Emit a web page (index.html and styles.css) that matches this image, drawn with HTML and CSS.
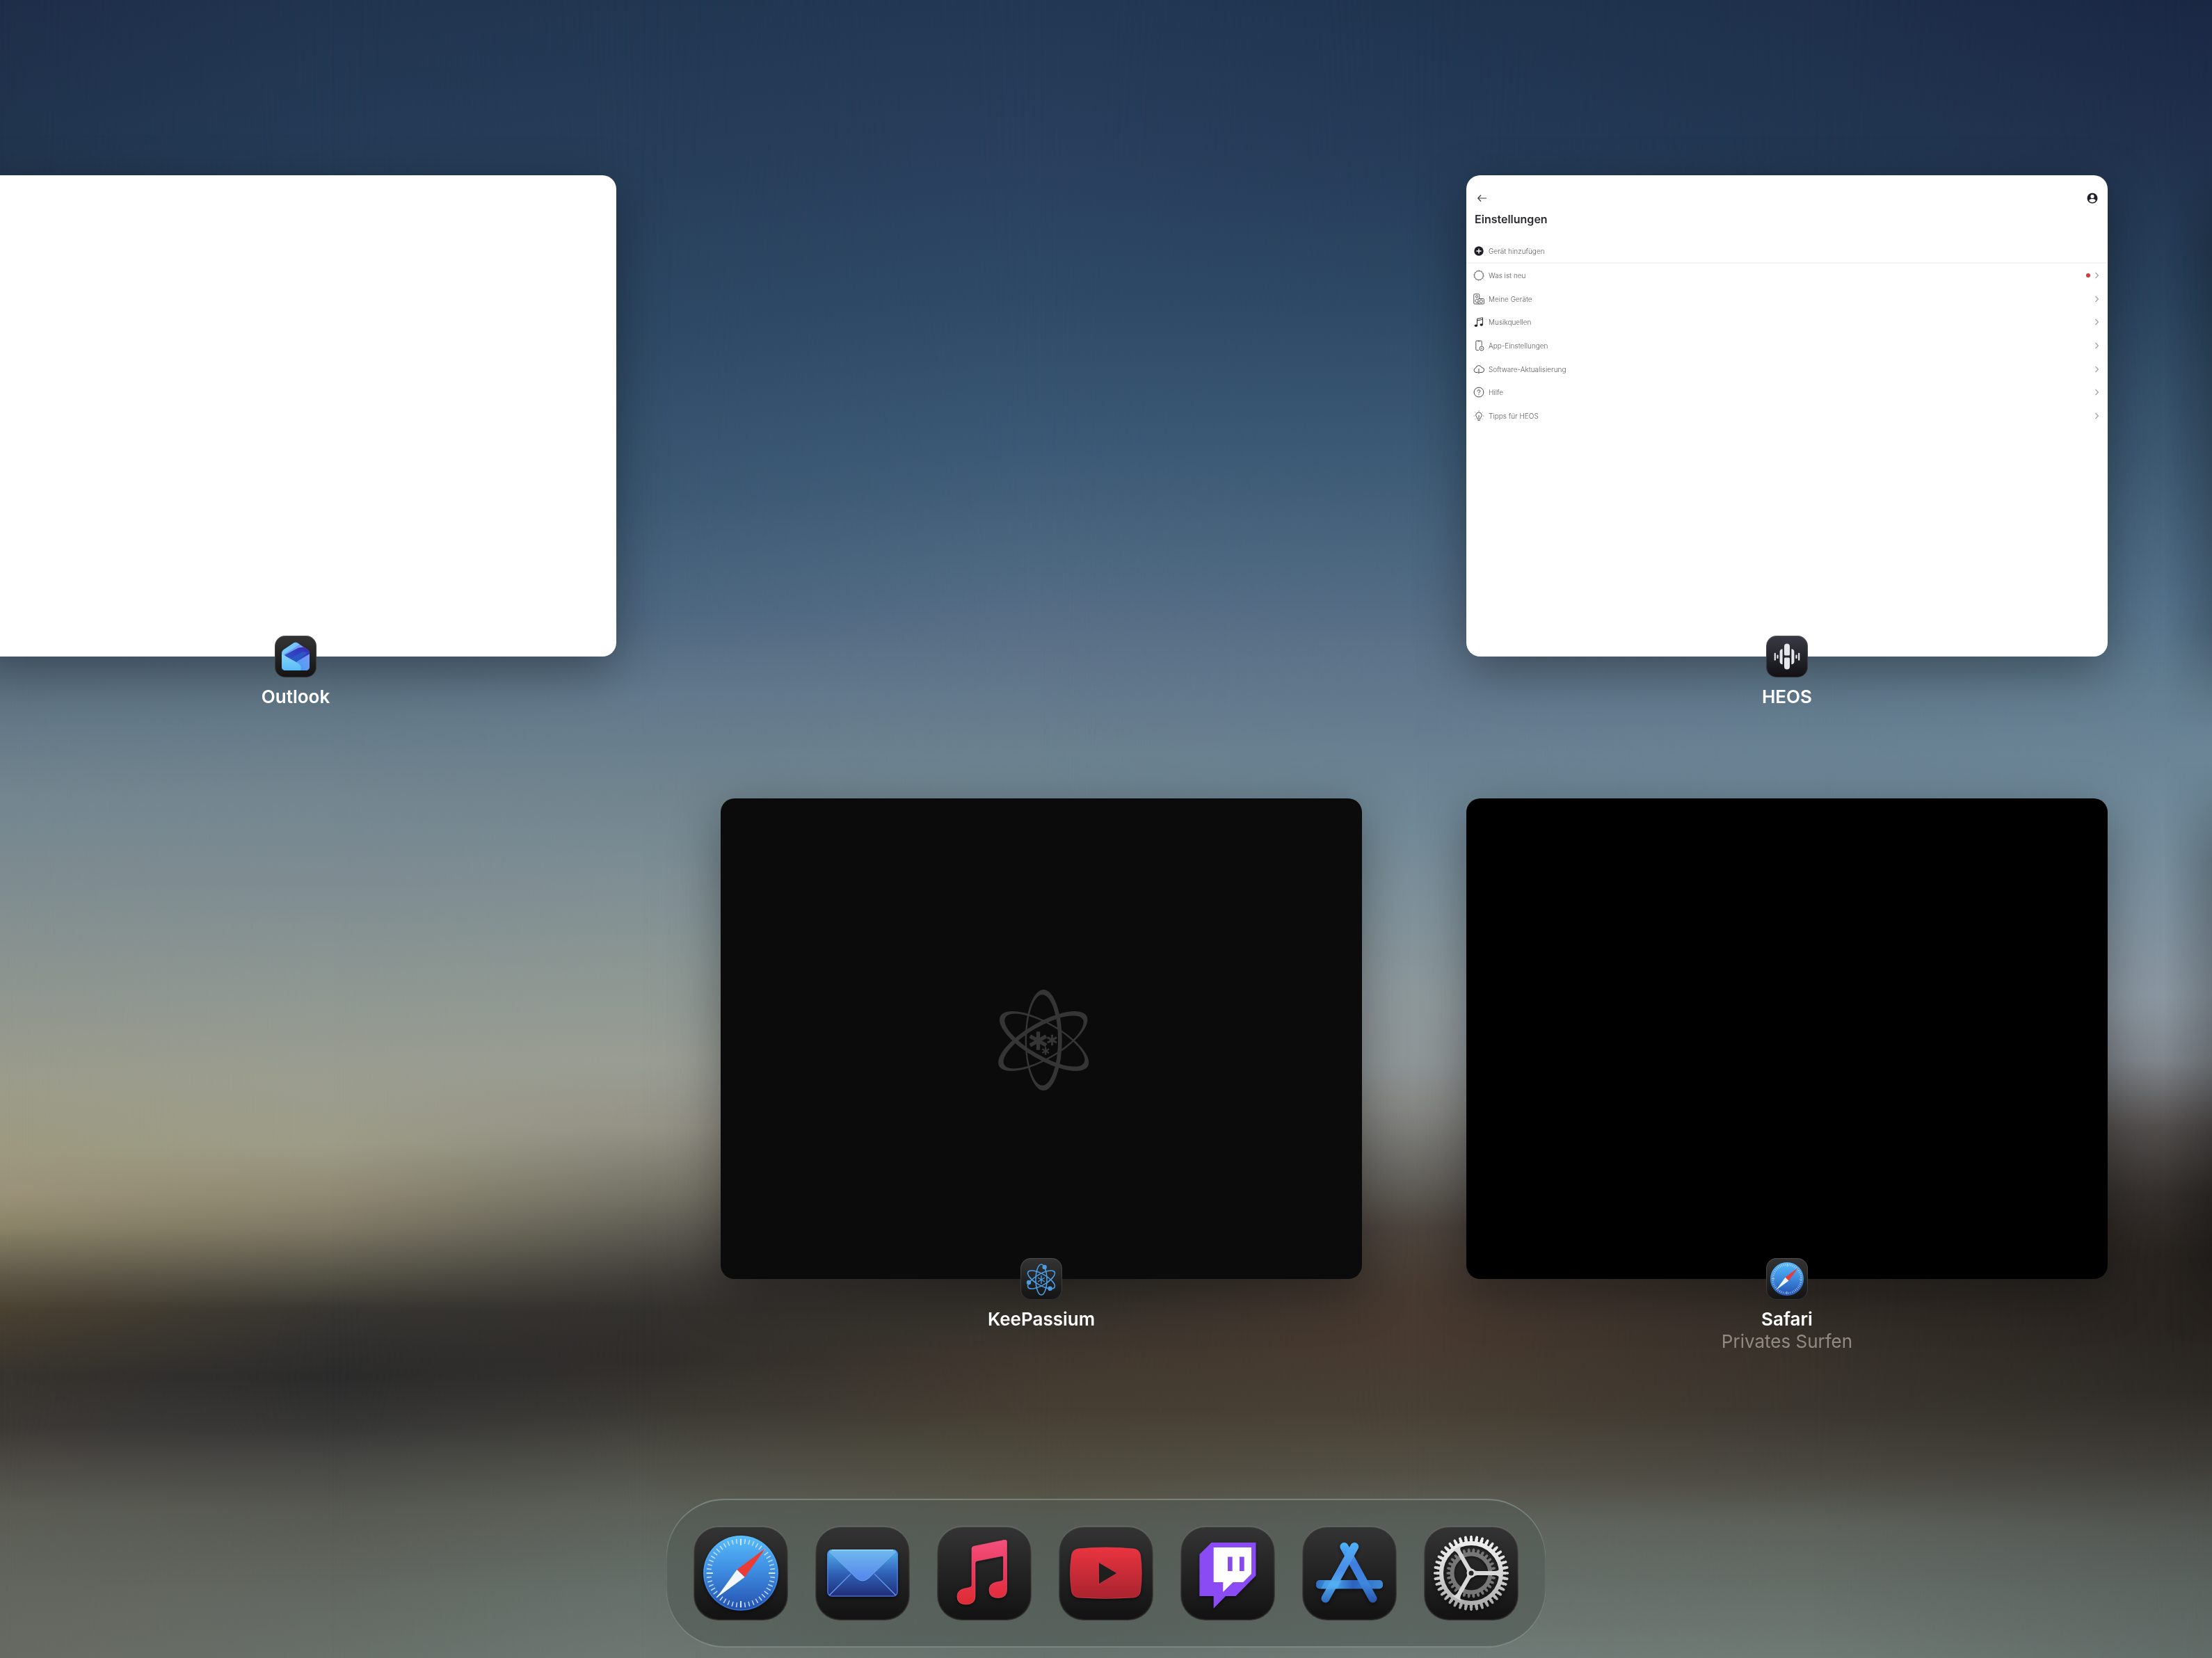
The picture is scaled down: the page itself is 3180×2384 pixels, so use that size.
FILE: index.html
```html
<!DOCTYPE html>
<html lang="de">
<head>
<meta charset="utf-8">
<meta name="viewport" content="width=device-width, initial-scale=1">
<title>App-Umschalter</title>
<link rel="stylesheet" href="styles.css">
</head>
<body>
<div class="wallpaper" aria-hidden="true">
  <div class="tone tone-a"></div>
  <div class="tone tone-b"></div>
  <div class="tone tone-c"></div>
  <div class="tone tone-d"></div>
  <div class="tone tone-e"></div>
  <div class="tone tone-f"></div>
  <div class="tone tone-g"></div>
  <div class="edge-shade"></div>
</div>

<svg class="defs" width="0" height="0" aria-hidden="true">
  <defs>
    <linearGradient id="blueDisc" x1="0" y1="0" x2="0" y2="1"><stop offset="0" stop-color="#58bdfb"/><stop offset=".45" stop-color="#3f8ee2"/><stop offset="1" stop-color="#2350ae"/></linearGradient>
    <linearGradient id="whiteNeedle" x1="1" y1="0" x2="0" y2="1"><stop offset="0" stop-color="#eaf3fd"/><stop offset="1" stop-color="#ffffff"/></linearGradient>
    <linearGradient id="mailBody" x1="0" y1="0" x2="0" y2="1"><stop offset="0" stop-color="#55b2ee"/><stop offset=".5" stop-color="#2f62b8"/><stop offset="1" stop-color="#202c74"/></linearGradient>
    <linearGradient id="mailFlap" x1="0" y1="0" x2="0" y2="1"><stop offset="0" stop-color="#70b8ee"/><stop offset="1" stop-color="#5585ec"/></linearGradient>
    <linearGradient id="music" x1="0" y1="0" x2="0" y2="1"><stop offset="0" stop-color="#f2517d"/><stop offset=".5" stop-color="#ee365a"/><stop offset="1" stop-color="#dc2d31"/></linearGradient>
    <linearGradient id="tube" x1="0" y1="0" x2="0" y2="1"><stop offset="0" stop-color="#ea343f"/><stop offset="1" stop-color="#a8232f"/></linearGradient>
    <linearGradient id="barLeft" gradientUnits="userSpaceOnUse" x1="0" y1="24" x2="0" y2="110"><stop offset="0" stop-color="#4fb0f6"/><stop offset=".45" stop-color="#4b8ee6"/><stop offset=".7" stop-color="#4fa9ee"/><stop offset="1" stop-color="#2e6dbd"/></linearGradient>
    <linearGradient id="barRight" gradientUnits="userSpaceOnUse" x1="0" y1="24" x2="0" y2="110"><stop offset="0" stop-color="#4db5fa"/><stop offset=".35" stop-color="#3f7de0"/><stop offset=".7" stop-color="#3f86dc"/><stop offset="1" stop-color="#2754ab"/></linearGradient>
    <linearGradient id="barFlat" x1="0" y1="0" x2="1" y2="0"><stop offset="0" stop-color="#2f6dc4"/><stop offset=".3" stop-color="#48a0ea"/><stop offset=".55" stop-color="#2d62be"/><stop offset="1" stop-color="#3f8ad6"/></linearGradient>
    <linearGradient id="steel" gradientUnits="userSpaceOnUse" x1="0" y1="14" x2="0" y2="122"><stop offset="0" stop-color="#f2f2f2"/><stop offset=".5" stop-color="#d6d6d6"/><stop offset="1" stop-color="#a4a4a4"/></linearGradient>
    <linearGradient id="outBack" x1="0" y1="0" x2="1" y2="0"><stop offset="0" stop-color="#6cc4fb"/><stop offset="1" stop-color="#8a7bf0"/></linearGradient>
    <linearGradient id="outBand" x1="0" y1="1" x2="1" y2="0"><stop offset="0" stop-color="#2a5fd0"/><stop offset="1" stop-color="#3a24b4"/></linearGradient>
    <linearGradient id="outFront" x1="0" y1="0" x2="0" y2="1"><stop offset="0" stop-color="#86d8fc"/><stop offset="1" stop-color="#55b9f7"/></linearGradient>
    <linearGradient id="outSide" x1="1" y1="0" x2="0" y2="1"><stop offset="0" stop-color="#7f9af8"/><stop offset="1" stop-color="#3d9bf0"/></linearGradient>
    <symbol id="compass" viewBox="0 0 108 108">
      <circle cx="54" cy="54" r="54" fill="url(#blueDisc)"/>
      <circle cx="54" cy="54" r="53" fill="none" stroke="#66c4ff" stroke-opacity=".35" stroke-width="1"/>
      <circle cx="54" cy="54" r="46" fill="none" stroke="#d6eaff" stroke-opacity=".85" stroke-width="7" pathLength="48" stroke-dasharray=".26 .74" stroke-dashoffset=".13"/>
      <circle cx="54" cy="54" r="44.500" fill="none" stroke="#d6eaff" stroke-width="9" pathLength="4" stroke-dasharray=".03 .97" stroke-dashoffset=".015"/>
      <path d="M89.700 18 59.600 59.800 48.400 49z" fill="#ec3b36"/>
      <path d="M19 89.500 48.400 49 59.600 59.800z" fill="url(#whiteNeedle)"/>
    </symbol>
    <symbol id="chevron" viewBox="0 0 16 16"><path d="M6.500 4 10.300 8l-3.800 4" fill="none" stroke="#a3a5ad" stroke-width="1.400"/></symbol>
  </defs>
</svg>

<main class="switcher">
  <article class="app">
    <div class="window window-light"></div>
    <div class="badge">
      <svg class="badge-art" viewBox="0 0 60 60" aria-hidden="true">
        <clipPath id="envelope"><path d="M26.500 11q3.500-2.400 7 0L47 20q3 2 3 5v19q0 6-6 6H16q-6 0-6-6V25q0-3 3-5z"/></clipPath>
        <g clip-path="url(#envelope)">
          <path d="M8 8h44v44H8z" fill="url(#outBack)"/>
          <path d="M8 31 36 12l-6-6L6 20z" fill="#74cdfc" opacity=".75"/>
          <path d="M13 27 35 13.500q6 2 6 5L20 32z" fill="#6f9cf6"/>
          <path d="M14 28 34 17.500 44 16l10 6v8L30 41z" fill="url(#outBand)"/>
          <path d="M22 33 40 23l8 1-18 14z" fill="#2b57c4"/>
          <path d="M52 25v27H30l2-15z" fill="url(#outSide)"/>
          <path d="M8 25.500V52h27q6-6-1-12-1-1-3-2z" fill="url(#outFront)"/>
        </g>
      </svg>
    </div>
    <h2 class="app-name">Outlook</h2>
  </article>

  <article class="app column-three">
    <div class="window window-light settings">
      <header class="settings-bar">
        <button class="icon-button" aria-label="Zurück"><svg viewBox="0 0 16 16"><path d="M15 8H3M7 3.500 2.700 8 7 12.500" fill="none" stroke="#3c3c41" stroke-width="1.200"/></svg></button>
        <button class="icon-button" aria-label="Konto"><svg viewBox="0 0 16 16"><circle cx="8" cy="8" r="7.500" fill="#1f2026"/><circle cx="8" cy="5.400" r="2.600" fill="#fff"/><path d="M3.300 11.300Q4 8.900 8 8.900t4.700 2.400Q11.500 14 8 14t-4.700-2.700z" fill="#fff"/></svg></button>
      </header>
      <h3 class="settings-title">Einstellungen</h3>
      <button class="settings-row settings-add">
        <svg class="row-icon" viewBox="0 0 16 16"><circle cx="8" cy="8" r="6.700" fill="#1f2026"/><path d="M8 4.500v7M4.500 8h7" stroke="#fff" stroke-width="1.400"/></svg>
        <span>Gerät hinzufügen</span>
      </button>
      <nav class="settings-list">
        <button class="settings-row"><svg class="row-icon" viewBox="0 0 16 16"><circle cx="8" cy="8" r="6.400" fill="none" stroke="#55555a" stroke-width="1"/><circle cx="8" cy="8" r="7" fill="none" stroke="#77777c" stroke-width="1" pathLength="12" stroke-dasharray=".5 .5"/></svg><span>Was ist neu</span><i class="dot"></i><svg class="chevron"><use href="#chevron"/></svg></button>
        <button class="settings-row"><svg class="row-icon" viewBox="0 0 16 16" fill="none" stroke="#55555a"><path d="M8.500 15H2Q.8 15 .8 14V2Q.8.800 2 .800h5.500q1.200 0 1.200 1.200v5"/><circle cx="5" cy="4.500" r="1.600"/><path d="M6.500 8.600a2.300 2.300 0 1 0 0 3.800"/><rect x="7" y="7.500" width="8.400" height="7.500" rx="1"/><circle cx="11.200" cy="11.200" r="2.200"/></svg><span>Meine Geräte</span><svg class="chevron"><use href="#chevron"/></svg></button>
        <button class="settings-row"><svg class="row-icon" viewBox="0 0 16 16"><path d="M5.500 13V3.500L13.500 1.800v10M5.500 6l8-1.700" fill="none" stroke="#2a2a2f" stroke-width="1"/><ellipse cx="3.900" cy="13.200" rx="2.200" ry="1.800" fill="#1f2026"/><ellipse cx="11.700" cy="12" rx="2.200" ry="1.800" fill="#1f2026"/></svg><span>Musikquellen</span><svg class="chevron"><use href="#chevron"/></svg></button>
        <button class="settings-row"><svg class="row-icon" viewBox="0 0 16 16" fill="none" stroke="#55555a"><path d="M8 14.500H5q-1.200 0-1.200-1.200V2.200Q3.800 1 5 1h6q1.200 0 1.200 1.200v6M6.500 1.800h3"/><circle cx="12" cy="12" r="3"/><path d="M10.800 12h2.400"/></svg><span>App-Einstellungen</span><svg class="chevron"><use href="#chevron"/></svg></button>
        <button class="settings-row"><svg class="row-icon" viewBox="0 0 16 16" fill="none" stroke="#44444a"><path d="M6 12.500H4a3.200 3.200 0 0 1-.5-6.300 4.500 4.500 0 0 1 8.600-.7 3.500 3.500 0 0 1-.1 7h-2M8 7v6.500M6.300 12 8 13.700 9.700 12"/></svg><span>Software-Aktualisierung</span><svg class="chevron"><use href="#chevron"/></svg></button>
        <button class="settings-row"><svg class="row-icon" viewBox="0 0 16 16" fill="none" stroke="#44444a"><circle cx="8" cy="8" r="6.900"/><path d="M6 6.500Q6 4.700 8 4.700t2 1.700Q10 7.300 8 8.300v1.200M8 10.700v1.200"/></svg><span>Hilfe</span><svg class="chevron"><use href="#chevron"/></svg></button>
        <button class="settings-row"><svg class="row-icon" viewBox="0 0 16 16" fill="none" stroke="#55555a"><path d="M6 12.500Q6 11 5 10a4.200 4.200 0 1 1 6 0q-1 1-1 2.500zM6.500 14.500h3M8 7v4"/><path d="M8 0v1.500M2.300 2.300l1 1M13.700 2.300l-1 1M.5 8H2M14 8h1.500M2.300 13l1-1M13.700 13l-1-1" stroke-opacity=".6"/></svg><span>Tipps für HEOS</span><svg class="chevron"><use href="#chevron"/></svg></button>
      </nav>
    </div>
    <div class="badge badge-slate">
      <svg class="badge-art" viewBox="0 0 60 60" fill="#e6e7ec" aria-hidden="true">
        <path d="M26 27V15.500a4 4 0 0 1 8 0V27q0 1.500-1.500 1.500h-5Q26 28.500 26 27zM26 33v11.500a4 4 0 0 0 8 0V33q0-1.500-1.500-1.500h-5Q26 31.500 26 33z"/>
        <path d="M23.600 19.300v22q-4-.3-4-4v-14q0-3.700 4-4zM36.400 19.300v22q4-.3 4-4v-14q0-3.700-4-4z"/>
        <rect x="15.400" y="27.500" width="2.200" height="5.500" rx="1"/><rect x="42.400" y="27.500" width="2.200" height="5.500" rx="1"/>
        <rect x="11.700" y="24.700" width="2.200" height="11" rx="1"/><rect x="46.100" y="24.700" width="2.200" height="11" rx="1"/>
      </svg>
    </div>
    <h2 class="app-name">HEOS</h2>
  </article>

  <article class="app column-two">
    <div class="window window-charcoal">
      <svg class="atom" viewBox="94 89 400 440" aria-hidden="true" fill="#353535" fill-rule="evenodd">
        <path id="orbit" d="M302 97a80 218 0 0 1 0 436a80 218 0 0 1 0-436zM297 119a68 196 0 0 0 0 392a68 196 0 0 0 0-392z"/>
        <use href="#orbit" transform="rotate(120 302 318)"/>
        <use href="#orbit" transform="rotate(240 302 318)"/>
        <g stroke="#353535" stroke-width="16"><path d="M279 278v80M244 298l70 40M244 338l70-40"/><path stroke-width="9" d="M339 292v46M319 303.500l40 23M319 326.500l40-23"/><path stroke-width="7" d="M311 345v34M296 353.500l30 17M296 370.500l30-17"/></g>
      </svg>
    </div>
    <div class="badge">
      <svg class="badge-art" viewBox="0 0 60 60" fill="none" stroke="#4a9de4" stroke-width="1.600" aria-hidden="true">
        <ellipse cx="30" cy="31" rx="8" ry="22"/>
        <ellipse cx="30" cy="31" rx="8" ry="22" transform="rotate(60 30 31)"/>
        <ellipse cx="30" cy="31" rx="8" ry="22" transform="rotate(120 30 31)"/>
        <path d="M30 25v12M25 28l10 6M25 34l10-6" stroke-width="1.400"/>
        <g fill="#4a9de4" stroke="none"><circle cx="34.700" cy="13" r="3.200"/><circle cx="12" cy="35" r="3.200"/><circle cx="42.500" cy="43.700" r="3.200"/></g>
      </svg>
    </div>
    <h2 class="app-name">KeePassium</h2>
  </article>

  <article class="app">
    <div class="window window-black"></div>
    <div class="badge">
      <svg class="badge-art" viewBox="0 0 60 60" aria-hidden="true"><use href="#compass" x="6" y="6" width="48" height="48"/></svg>
    </div>
    <h2 class="app-name">Safari</h2>
    <p class="app-note">Privates Surfen</p>
  </article>
</main>

<nav class="dock" aria-label="Dock">
  <button class="tile" aria-label="Safari"><svg viewBox="0 0 136 136"><use href="#compass" x="14" y="14" width="108" height="108"/></svg></button>
  <button class="tile" aria-label="Mail"><svg viewBox="0 0 136 136">
    <rect x="17" y="34" width="102" height="68" rx="7" fill="url(#mailBody)"/>
    <rect x="18" y="35" width="100" height="66" rx="6" fill="none" stroke="#5380ea" stroke-opacity=".7" stroke-width="1.500"/>
    <path d="M20 100 51 69M116 100 85 69" stroke="#5f92ea" stroke-width="1.500"/>
    <path d="M20 37q3-2.500 6-2.500h84q3 0 6 2.500L77 75q-9 8-18 0z" fill="url(#mailFlap)" stroke="#73bbf6" stroke-opacity=".7"/>
    <path d="M24 34.700h88" stroke="#9adcf8" stroke-width="1.500"/>
  </svg></button>
  <button class="tile" aria-label="Musik"><svg viewBox="0 0 136 136">
    <path d="M50 33q0-3 3-3.700l44-9q3.500-.7 3.500 2.500v69q0 11.500-12.500 11.800-13 0-13-11.500 0-9 10-11l7.500-1.500q3-.7 3-3.500V45q0-2-2.500-1.500L57.500 50.500Q55 51 55 53.500V101q0 11.500-12.500 12-13.500 0-13.500-11.500 0-9 10-11.200l8-1.700q3-.7 3-3.600z" fill="url(#music)" stroke="#f4527c" stroke-opacity=".6"/>
  </svg></button>
  <button class="tile" aria-label="YouTube"><svg viewBox="0 0 136 136">
    <path d="M28 33q40-4 80 0 8 1 9.500 9 3.500 26 0 52-1.500 8-9.500 9-40 3-80 0-8-1-9.500-9-4-26 0-52Q20 34 28 33z" fill="url(#tube)" stroke="#f0465a" stroke-opacity=".55"/>
    <path d="M57.500 52.500 84 68 57.500 84z" fill="#1f1f1f" stroke="#c23142" stroke-width="1"/>
  </svg></button>
  <button class="tile" aria-label="Twitch"><svg viewBox="0 0 136 136">
    <path d="M44.500 24h64v47.500L79.500 101H65L47.700 118.700V101H27.400V41z" fill="#8a4bf5"/>
    <path d="M47.700 31H102v38L90 81H75.500L61.300 95V81H47.700z" fill="#fff"/>
    <path d="M68 44.500h6.700V65H68zM85 44.500h6.700V65H85z" fill="#8748ee"/>
  </svg></button>
  <button class="tile" aria-label="App Store"><svg viewBox="0 0 136 136" stroke-linecap="round">
    <rect x="20" y="78" width="96" height="12.500" rx="5" fill="url(#barFlat)"/>
    <path d="M60.400 30 101.500 104.500" stroke="url(#barRight)" stroke-width="12"/>
    <path d="M75.200 30 33.500 104.500" stroke="url(#barLeft)" stroke-width="12"/>
    <path d="M33 78.500h24l-6.500 12H27z" fill="#5bb6f6" opacity=".45"/>
  </svg></button>
  <button class="tile" aria-label="Einstellungen"><svg viewBox="0 0 136 136" fill="none">
    <g stroke="#777">
      <circle cx="68" cy="68" r="27.500" stroke-width="6"/>
      <circle cx="68" cy="68" r="32" stroke-width="4" pathLength="30" stroke-dasharray=".58 .42" stroke-dashoffset=".29"/>
      <circle cx="68" cy="68" r="34" stroke-width="3" pathLength="30" stroke-dasharray=".36 .64" stroke-dashoffset=".18"/>
    </g>
    <g stroke="url(#steel)">
      <circle cx="68" cy="68" r="43" stroke-width="6"/>
      <circle cx="68" cy="68" r="47.500" stroke-width="5" pathLength="40" stroke-dasharray=".6 .4" stroke-dashoffset=".3"/>
      <circle cx="68" cy="68" r="51" stroke-width="4" pathLength="40" stroke-dasharray=".46 .54" stroke-dashoffset=".23"/>
      <circle cx="68" cy="68" r="53.200" stroke-width="1.600" pathLength="40" stroke-dasharray=".3 .7" stroke-dashoffset=".15"/>
    </g>
    <g fill="#d8d8d8">
      <path id="spoke" d="M70 62.500q3 2.500 7 2.500h25q5 0 8-4.500v15q-3-4.500-8-4.500H77q-4 0-7 2.500z"/>
      <use href="#spoke" transform="rotate(120 68 68)"/>
      <use href="#spoke" transform="rotate(240 68 68)"/>
    </g>
    <circle cx="68" cy="68" r="5" fill="#232323" stroke="#dadada" stroke-width="3"/>
  </svg></button>
</nav>
</body>
</html>
```

FILE: styles.css
```css
* { box-sizing: border-box; }

body {
  margin: 0;
  min-height: 100vh;
  display: flex;
  flex-direction: column;
  overflow: hidden;
  background: #2b2b2b;
  color: #fff;
  font-family: Inter, "Liberation Sans", sans-serif;
}

button {
  margin: 0;
  padding: 0;
  border: 0;
  background: none;
  color: inherit;
  font: inherit;
}

h2, h3, p { margin: 0; }

.defs { position: absolute; }

/* Wallpaper: vertical tones that fade into each other from left to right */
.wallpaper {
  position: fixed;
  inset: 0;
  z-index: -1;
}

.tone {
  position: absolute;
  inset: 0;
}

.tone-a { background: linear-gradient(#1e2e49 0%, #22364f 10%, #2a435f 20%, #3a5671 30%, #4f697e 37%, #5f7484 42%, #738690 48%, #7e8c90 53%, #8f9690 60%, #9b9c8b 65%, #9d9a81 69%, #9b9279 72%, #8b8468 74%, #5f5848 77%, #4a4131 79%, #37332e 83%, #3c3935 86%, #4a4742 88%, #5a5c54 91%, #63665f 96%, #676a62 100%); }
.tone-b {
  background: linear-gradient(#213450 0%, #263c58 10%, #2d4764 20%, #3b5772 30%, #50697f 37%, #607686 42%, #738690 48%, #7e8c92 53%, #8f9892 60%, #9b9d90 65%, #9d9c87 69%, #8f8973 72%, #7e7865 74%, #545145 77%, #373531 79%, #2b2b2b 83%, #363635 86%, #454542 88%, #565851 91%, #626861 96%, #687069 100%);
  mask-image: linear-gradient(90deg, transparent, #000 15%);
}
.tone-c {
  background: linear-gradient(#223652 0%, #273e5a 10%, #2e4965 20%, #3c5974 30%, #4e6881 37%, #63798c 42%, #71858f 48%, #7e8e94 53%, #8b9693 58%, #999d93 64%, #959286 68%, #757366 72%, #605e54 74%, #423f3b 77%, #33312d 79%, #302d2a 82%, #3a3833 85%, #4d4d46 88%, #5b6058 91%, #66706a 96%, #6e7772 100%);
  mask-image: linear-gradient(90deg, transparent 15%, #000 29%);
}
.tone-d {
  background: linear-gradient(#223854 0%, #293f5d 9%, #2e4a66 18%, #3b5975 27%, #4d6881 34%, #5c7188 39%, #687e8e 44%, #6f8691 48%, #85939a 58%, #8b9090 65%, #5c5a55 72%, #322f2a 77%, #39342d 80%, #41382f 82%, #463e33 85%, #4b4639 87%, #565246 90%, #5b5f56 92%, #67726e 100%);
  mask-image: linear-gradient(90deg, transparent 29%, #000 47%);
}
.tone-e {
  background: linear-gradient(#203450 0%, #253b58 9%, #2d4864 18%, #3b5974 27%, #4c6780 34%, #5e748a 40%, #687f91 45%, #6f8796 49%, #7d909a 54%, #8d989b 60%, #8f9698 64%, #858682 67%, #65635e 71%, #4c443d 74%, #473a31 78%, #483a30 81%, #484034 85%, #545046 89%, #5f655e 92%, #707b77 100%);
  mask-image: linear-gradient(90deg, transparent 47%, #000 64%);
}
.tone-f {
  background: linear-gradient(#1e304c 0%, #223652 9%, #2a435e 18%, #39566f 27%, #4b667c 34%, #5d768a 40%, #688192 45%, #6f8999 49%, #7d909f 55%, #8d98a1 61%, #5c5a58 68%, #37302b 74%, #322c27 78%, #38322b 82%, #3c3730 85%, #4b4942 89%, #5d625b 92%, #6f7a75 100%);
  mask-image: linear-gradient(90deg, transparent 64%, #000 82%);
}
.tone-g {
  background: linear-gradient(#1a2743 0%, #20314d 9%, #2a435d 18%, #3e5a73 28%, #52708a 36%, #647f91 42%, #6f899a 48%, #7b8f9d 54%, #8a96a0 60%, #80868c 64%, #514c4a 68%, #322d2a 72%, #27221e 76%, #28231f 80%, #2d2a26 84%, #3d3b36 88%, #515550 92%, #5b635f 96%, #616b67 100%);
  mask-image: linear-gradient(90deg, transparent 82%, #000);
}

/* Shade thrown on the right edge by the next column of windows */
.edge-shade {
  position: absolute;
  inset: 0 0 0 auto;
  width: 70px;
  background: linear-gradient(90deg, transparent, rgba(0, 0, 0, .2));
  mask-image: linear-gradient(transparent 9%, #000 15%, #000 38%, transparent 44%, transparent 46%, #000 52%, #000 75%, transparent 81%);
}

/* Card grid, scrolled so that the first column is cut by the left edge */
.switcher {
  display: grid;
  grid-template-columns: repeat(3, 1fr);
  align-items: start;
  gap: 130px 150px;
  margin-left: -36px;
  padding: 252px 150px 0 0;
}

.app {
  display: flex;
  flex-direction: column;
  align-items: center;
}

.column-two { grid-column: 2; }
.column-three { grid-column: 3; }

.window {
  width: 100%;
  aspect-ratio: 4 / 3;
  border-radius: 20px;
  box-shadow: 0 20px 70px rgba(0, 0, 0, .35);
  overflow: hidden;
}

.window-light { background: #fff; }
.window-black { background: #000; }
.window-charcoal {
  background: #0b0b0b;
  display: grid;
  place-items: center;
}

.atom {
  width: 133px;
  height: 147px;
  overflow: visible;
}

.badge {
  width: 60px;
  height: 60px;
  margin-top: -30px;
  border-radius: 15px;
  background: linear-gradient(#343434, #131313);
  box-shadow: inset 0 0 1px 1px rgba(255, 255, 255, .14);
  z-index: 1;
}

.badge-slate { background: linear-gradient(#3a3a45, #101014); }

.badge-art {
  display: block;
  width: 100%;
  height: 100%;
}

.app-name {
  margin-top: 12px;
  font-size: 26px;
  line-height: 32px;
  font-weight: 600;
}

.app-note {
  font-size: 26px;
  line-height: 32px;
  color: #918a80;
}

/* HEOS settings screen */
.settings {
  display: flex;
  flex-direction: column;
  color: #5c5c61;
}

.settings-bar {
  display: flex;
  justify-content: space-between;
  padding: 25px 14px 0;
}

.icon-button {
  width: 16px;
  height: 16px;
}

.icon-button svg {
  display: block;
  width: 16px;
  height: 16px;
}

.settings-title {
  margin: 12px 12px 19px;
  font-size: 16px;
  line-height: 20px;
  font-weight: 600;
  color: #2b2b31;
}

.settings-row {
  display: flex;
  align-items: center;
  width: 100%;
  padding: 0 8px 0 10px;
  font-size: 10px;
  line-height: 16px;
  font-weight: 300;
  text-align: left;
}

.settings-add {
  height: 35px;
  border-bottom: 2px solid #f4f4f5;
}

.settings-list {
  display: grid;
  grid-auto-rows: 1fr;
  height: 236px;
}

.row-icon {
  width: 16px;
  height: 16px;
  margin-right: 6px;
}

.dot {
  width: 6px;
  height: 6px;
  margin: 0 1px 0 auto;
  border-radius: 50%;
  background: #d9383a;
}

.chevron {
  width: 16px;
  height: 16px;
}

span + .chevron { margin-left: auto; }

/* Dock */
.dock {
  display: flex;
  align-self: center;
  gap: 39px;
  margin: auto 0 15px;
  padding: 39px;
  border-radius: 84px;
  background: linear-gradient(rgba(80, 89, 82, .5), rgba(74, 84, 80, .5));
  box-shadow: inset 0 2px 1px rgba(170, 190, 180, .4), inset 0 -2px 1px rgba(170, 185, 178, .4), inset 0 0 2px 1px rgba(190, 200, 195, .12);
}

.tile {
  width: 136px;
  height: 136px;
  border-radius: 36px;
  background: linear-gradient(#343434, #121212);
  box-shadow: inset 0 0 2px 1px rgba(255, 255, 255, .2), inset 0 2px 1px rgba(255, 255, 255, .14);
}

.tile svg {
  display: block;
  width: 100%;
  height: 100%;
  filter: drop-shadow(0 2px 2px rgba(0, 0, 0, .5));
}
```
